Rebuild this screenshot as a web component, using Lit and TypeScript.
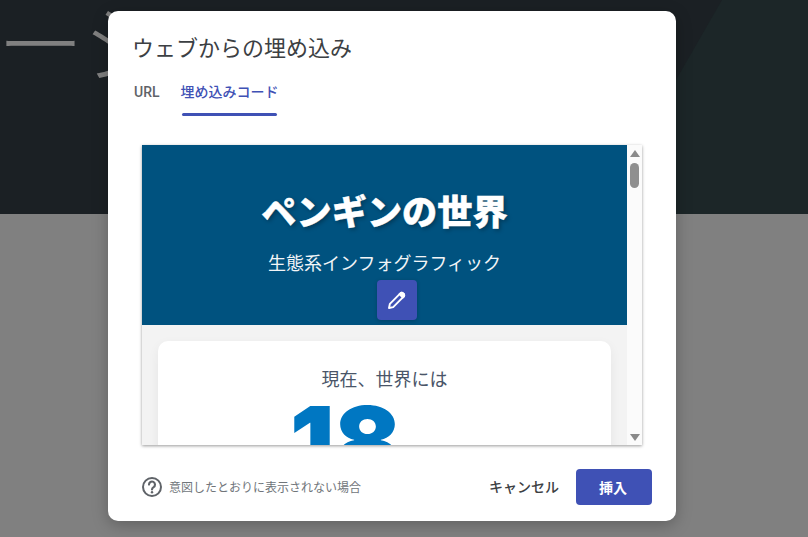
import { LitElement, html, css } from 'lit'
import { customElement } from 'lit/decorators.js'

@customElement('app-root')
export class AppRoot extends LitElement {
  static styles = css`
    :host {
      display: block;
      position: relative;
      width: 808px;
      height: 537px;
      overflow: hidden;
      background: #808080;
      font-family: Roboto, "Noto Sans CJK JP", sans-serif;
    }
    .hero {
      position: relative;
      height: 214px;
      overflow: hidden;
      background: #1b2024;
    }
    .hero svg {
      position: absolute;
      inset: 0;
    }
    .hero-text {
      position: absolute;
      left: -3px;
      top: -21px;
      font: 300 87px/1.4 "Noto Sans CJK JP", sans-serif;
      color: #808080;
      white-space: nowrap;
    }
    .modal {
      position: absolute;
      left: 108px;
      top: 11px;
      width: 568px;
      height: 510px;
      box-sizing: border-box;
      display: flex;
      flex-direction: column;
      background: #fff;
      border-radius: 10px;
      box-shadow: 0 4px 16px rgba(0, 0, 0, 0.25);
    }
    h2 {
      margin: 0;
      padding: 19px 0 0 24px;
      font: 400 22px/32px "Noto Sans CJK JP", sans-serif;
      color: #3c4043;
    }
    .tabs {
      display: flex;
      gap: 21px;
      margin: 16px 0 0 26px;
      font-size: 14px;
      font-weight: 500;
      color: #5f6368;
    }
    .tab {
      padding-top: 4px;
      height: 35px;
      line-height: 20px;
      box-sizing: border-box;
    }
    .tab.active {
      position: relative;
      color: #3f51b5;
    }
    .tab.active::after {
      content: '';
      position: absolute;
      left: 1px;
      right: 2px;
      bottom: -3px;
      height: 3px;
      border-radius: 2px;
      background: #3f51b5;
    }
    .frame {
      display: flex;
      width: 500px;
      height: 300px;
      margin: 32px 0 0 34px;
      flex: none;
      background: #f3f3f3;
      box-shadow: 0 1px 3px rgba(0, 0, 0, 0.4);
    }
    .page {
      flex: 1;
      min-width: 0;
      overflow: hidden;
    }
    .banner {
      height: 180px;
      box-sizing: border-box;
      padding-top: 40px;
      display: flex;
      flex-direction: column;
      align-items: center;
      background: #00527f;
      color: #fff;
    }
    .banner h1 {
      margin: 0;
      font: 900 35.2px/50px "Noto Sans CJK JP", sans-serif;
      -webkit-text-stroke: 0.4px #fff;
      text-shadow: 2px 2px 4px rgba(0, 0, 0, 0.3);
    }
    .banner p {
      margin: 13px 0 0;
      font: 400 18px/28px "Noto Sans CJK JP", sans-serif;
      color: #f2f5f7;
    }
    .pen {
      width: 40px;
      height: 40px;
      margin: 4px 0 0 24px;
      flex: none;
      display: flex;
      align-items: center;
      justify-content: center;
      border-radius: 4px;
      background: #3f51b5;
      box-shadow: 0 1px 4px rgba(0, 0, 0, 0.2);
    }
    .card {
      margin: 16px 16px 0;
      height: 140px;
      box-sizing: border-box;
      padding-top: 24px;
      background: #fff;
      border-radius: 10px;
      box-shadow: 0 4px 12px rgba(0, 0, 0, 0.06);
      text-align: center;
    }
    .card p {
      margin: 0;
      font: 400 18px/27px "Noto Sans CJK JP", sans-serif;
      color: #4a5568;
    }
    .count {
      width: 110px;
      margin-left: 132px;
      font: 900 98px/100px Inter, sans-serif;
      color: #0077c2;
    }
    .scrollbar {
      width: 15px;
      flex: none;
      box-sizing: border-box;
      display: flex;
      flex-direction: column;
      align-items: center;
      padding: 5px 0 4px;
      background: #fbfbfb;
    }
    .arrow-up,
    .arrow-down {
      width: 0;
      height: 0;
      border-left: 5px solid transparent;
      border-right: 5px solid transparent;
    }
    .arrow-up { border-bottom: 7px solid #8a8a8a; }
    .arrow-down { border-top: 7px solid #8a8a8a; margin-top: auto; }
    .thumb {
      width: 9px;
      height: 25px;
      margin-top: 6px;
      border-radius: 5px;
      background: #8f8f8f;
    }
    .foot {
      flex: 1;
      display: flex;
      align-items: center;
      padding: 8px 24px 0 32px;
    }
    .help {
      display: flex;
      align-items: center;
      gap: 5px;
      font: 400 12px/16px "Noto Sans CJK JP", sans-serif;
      color: #70757a;
    }
    .cancel {
      margin-left: auto;
      font: 500 14px/20px Roboto, "Noto Sans CJK JP", sans-serif;
      color: #3c4043;
    }
    .insert {
      width: 76px;
      height: 36px;
      box-sizing: border-box;
      padding-right: 2px;
      margin-left: 17px;
      display: flex;
      align-items: center;
      justify-content: center;
      border-radius: 4px;
      background: #3f51b5;
      color: #fff;
      font: 700 14px/20px "Noto Sans CJK JP", sans-serif;
    }
  `

  render() {
    return html`
      <div class="hero">
        <svg width="808" height="214" viewBox="0 0 808 214">
          <polygon points="722,0 808,0 808,214 599,214" fill="#1c2628" />
        </svg>
        <div class="hero-text">ーション</div>
      </div>
      <div class="modal">
        <h2>ウェブからの埋め込み</h2>
        <div class="tabs">
          <div class="tab">URL</div>
          <div class="tab active">埋め込みコード</div>
        </div>
        <div class="frame">
          <div class="page">
            <div class="banner">
              <h1>ペンギンの世界</h1>
              <p>生態系インフォグラフィック</p>
              <div class="pen">
                <svg width="20" height="20" viewBox="0 0 20 20" fill="none" stroke="#fff" stroke-width="1.9" stroke-linejoin="round">
                  <path d="M2 18l.9-4.2L13.3 3.4a2 2 0 0 1 2.9 0l.4.4a2 2 0 0 1 0 2.9L6.2 17.1z" />
                  <path d="M12.5 4.2l.8-.8a2 2 0 0 1 2.9 0l.4.4a2 2 0 0 1 0 2.9l-.8.8z" fill="#fff" />
                </svg>
              </div>
            </div>
            <div class="card">
              <p>現在、世界には</p>
              <div class="count">18</div>
            </div>
          </div>
          <div class="scrollbar">
            <div class="arrow-up"></div>
            <div class="thumb"></div>
            <div class="arrow-down"></div>
          </div>
        </div>
        <div class="foot">
          <div class="help">
            <svg width="24" height="24" viewBox="0 0 24 24" fill="none" stroke="#5f6368" stroke-width="2">
              <circle cx="12" cy="12" r="9" />
              <path d="M9 9.6a3 3 0 1 1 4.6 2.5c-1 .6-1.6 1.2-1.6 2.4" stroke-width="2.1" stroke-linecap="round" />
              <circle cx="12" cy="17.2" r="1.2" fill="#5f6368" stroke="none" />
            </svg>
            <span>意図したとおりに表示されない場合</span>
          </div>
          <div class="cancel">キャンセル</div>
          <div class="insert">挿入</div>
        </div>
      </div>
    `
  }
}
